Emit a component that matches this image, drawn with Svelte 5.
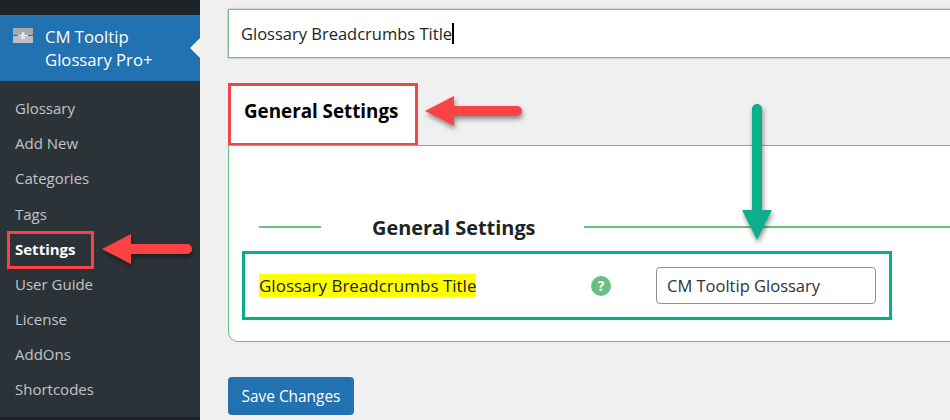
<script>
	const menu_items = ['Glossary', 'Add New', 'Categories', 'Tags', 'Settings', 'User Guide', 'License', 'AddOns', 'Shortcodes'];
</script>

<div class="page">
	<aside class="sidebar">
		<div class="plugin_head">
			<svg class="plugin_icon" width="20" height="15" viewBox="0 0 20 15" aria-hidden="true">
				<path d="M0 0H20V7H0Z" fill="#a7aaad" />
				<path d="M0 8H20V15H0Z" fill="#bcbfc2" />
				<path d="M9 4H11L12 7H15V8H12V11H8V8H5V7H8Z" fill="#dfe3e6" />
			</svg>
			<span>CM Tooltip<br />Glossary Pro+</span>
			<i class="current_notch"></i>
		</div>
		<ul class="menu">
			{#each menu_items as item}
				<li class:active={item === 'Settings'}>
					<span>{item}</span>
				</li>
			{/each}
		</ul>
	</aside>

	<main class="content">
		<div class="title_input">Glossary Breadcrumbs Title<i class="caret"></i></div>

		<div class="tab">General Settings</div>

		<section class="panel">
			<div class="legend">
				<h3>General Settings</h3>
			</div>
			<div class="setting_row">
				<div class="setting_label"><mark>Glossary Breadcrumbs Title</mark></div>
				<div class="help_icon">?</div>
				<div class="setting_input">CM Tooltip Glossary</div>
			</div>
		</section>

		<button class="save">Save Changes</button>
	</main>

	<svg class="annotations" width="950" height="420" viewBox="0 0 950 420" aria-hidden="true">
		<defs>
			<filter id="arrow_shadow" x="-20%" y="-20%" width="140%" height="140%">
				<feDropShadow dx="1" dy="3" stdDeviation="2.5" flood-color="#000" flood-opacity="0.45" />
			</filter>
		</defs>
		<g fill="#fb4245" filter="url(#arrow_shadow)">
			<path d="M102 249L131 234V244H187A5 5 0 0 1 187 254H131V264Z" />
			<path d="M425 111L454 96V106H517A5 5 0 0 1 517 116H454V126Z" />
		</g>
		<path
			d="M752 109A5 5 0 0 1 762 109V210H772L757 240L742 210H752Z"
			fill="#07ae8c"
			filter="url(#arrow_shadow)"
		/>
	</svg>
</div>

<style>
	:global(body) {
		margin: 0;
	}

	.page {
		position: relative;
		display: flex;
		width: 950px;
		height: 420px;
		overflow: hidden;
		background: #f0f0f1;
		font-family: 'Open Sans', sans-serif;
		color: #1d2327;
	}

	.sidebar {
		flex: 0 0 200px;
		box-sizing: border-box;
		height: 420px;
		padding-top: 15px;
		background: #2c3338;
		box-shadow: inset 0 15px 0 #1d2327, inset 0 -3px 0 #1d2327;
	}

	.plugin_head {
		position: relative;
		display: flex;
		gap: 12px;
		box-sizing: border-box;
		height: 66px;
		padding: 10px 13px;
		background: #2271b1;
		color: #fff;
		font-size: 16.7px;
		line-height: 23px;
	}

	.plugin_icon {
		flex: none;
		margin-top: 3px;
	}

	.current_notch {
		position: absolute;
		right: 0;
		top: 33px;
		transform: translateY(-50%);
		border: 10px solid transparent;
		border-left-width: 0;
		border-right-color: #f0f0f1;
	}

	.menu {
		margin: 0;
		padding: 9.4px 0 0;
		list-style: none;
		color: #c3c4c7;
		font-size: 15px;
	}

	.menu li {
		display: flex;
		align-items: center;
		height: 35.2px;
		padding-left: 15px;
	}

	.menu li.active {
		position: relative;
		color: #fff;
		font-weight: 700;
	}

	.menu li.active::after {
		content: '';
		position: absolute;
		left: 7px;
		top: -0.4px;
		width: 81px;
		height: 32px;
		border: 3px solid #fb4245;
	}

	.content {
		flex: 1;
		box-sizing: border-box;
		min-width: 0;
		padding: 9px 0 0 28px;
	}

	.title_input {
		display: flex;
		align-items: center;
		box-sizing: border-box;
		width: 760px;
		height: 49px;
		padding-left: 12px;
		background: #fff;
		border: 1px solid #7fb58c;
		box-shadow: 0 0 2px rgba(0, 60, 20, 0.4);
		font-size: 16.5px;
		color: #1d2327;
	}

	.caret {
		display: inline-block;
		width: 2px;
		height: 21px;
		background: #000;
	}

	.tab {
		display: flex;
		align-items: center;
		box-sizing: border-box;
		width: 190px;
		height: 63px;
		margin-top: 25px;
		padding: 0 0 8px 13px;
		background: #fff;
		border: 3px solid #f04648;
		font-size: 18.8px;
		font-weight: 700;
		color: #000;
	}

	.panel {
		box-sizing: border-box;
		width: 760px;
		height: 197px;
		margin-top: -1px;
		padding: 68px 0 0 13px;
		background: #fff;
		border: 1px solid #68c07e;
		border-bottom-left-radius: 10px;
	}

	.legend {
		display: flex;
		align-items: center;
		height: 26px;
		margin-left: 17px;
		background: linear-gradient(#68c07e, #68c07e) 0 50% / 62px 2px no-repeat,
			linear-gradient(#68c07e, #68c07e) 325px 50% / 400px 2px no-repeat;
	}

	.legend h3 {
		margin: 0 0 0 113px;
		font-size: 19.9px;
		font-weight: 700;
		color: #1d2327;
	}

	.setting_row {
		display: flex;
		align-items: center;
		box-sizing: border-box;
		width: 650px;
		height: 69px;
		margin-top: 11px;
		padding-left: 14px;
		border: 3px solid #07ae8c;
	}

	.setting_label {
		width: 332px;
		padding-bottom: 1px;
		font-size: 17px;
	}

	mark {
		padding: 0;
		background: #ff0;
		color: #1d2327;
	}

	.help_icon {
		display: flex;
		align-items: center;
		justify-content: center;
		flex: none;
		width: 20px;
		height: 20px;
		border-radius: 50%;
		background: #6cbf84;
		color: #fff;
		font-size: 14px;
		font-weight: 700;
	}

	.setting_input {
		display: flex;
		align-items: center;
		box-sizing: border-box;
		width: 220px;
		height: 37px;
		margin: -1px 0 0 45px;
		padding-left: 10px;
		background: #fff;
		border: 1px solid #8c8f94;
		border-radius: 4px;
		font-size: 16.5px;
		color: #2c3338;
	}

	.save {
		display: block;
		width: 126px;
		height: 38px;
		margin-top: 35px;
		padding: 0;
		background: #2271b1;
		border: 0;
		border-radius: 4px;
		color: #fff;
		font-family: inherit;
		font-size: 15.4px;
	}

	.annotations {
		position: absolute;
		left: 0;
		top: 0;
		pointer-events: none;
	}
</style>
